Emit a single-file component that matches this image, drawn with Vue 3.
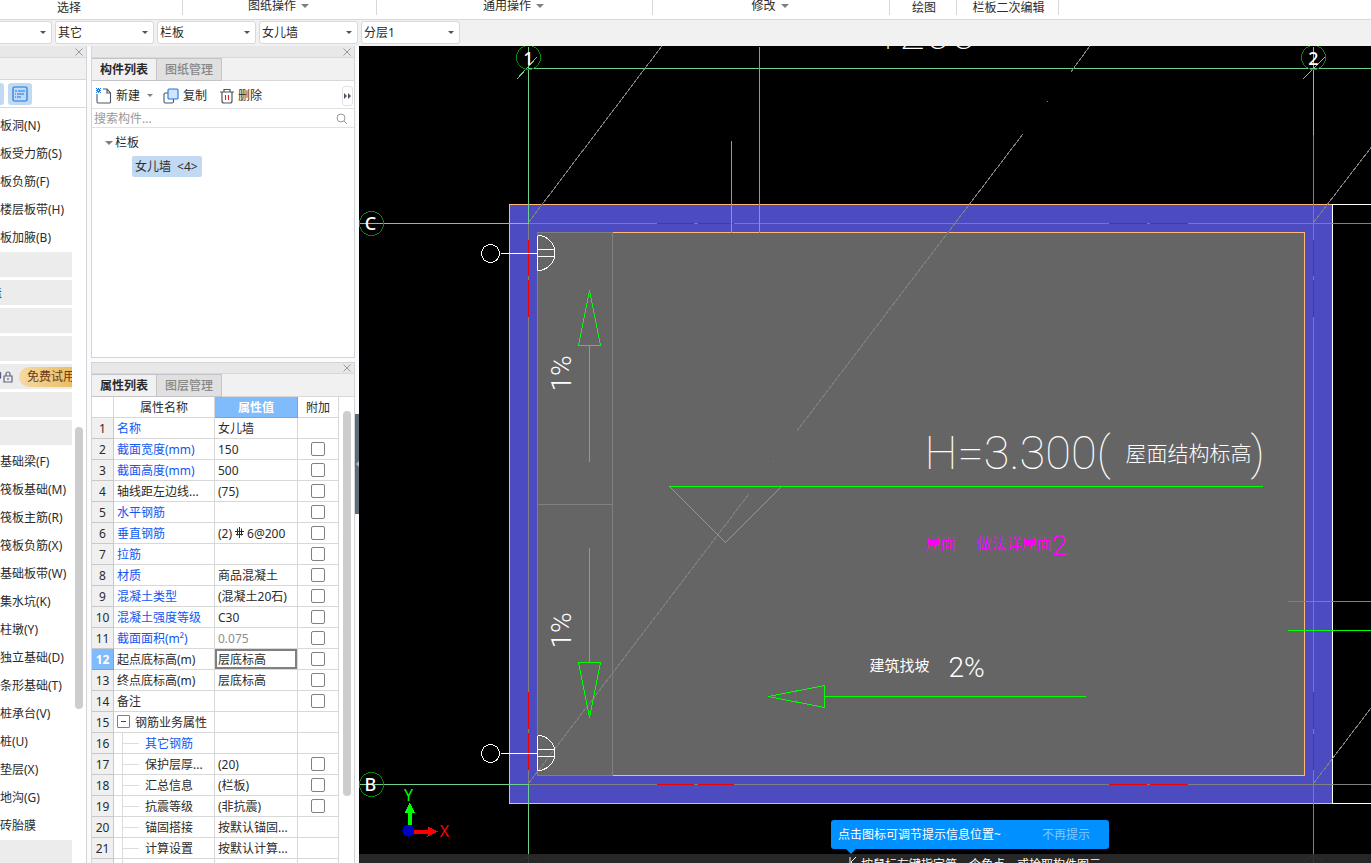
<template>
  <div class="app">
    <nav class="ribbon">
      <div
        v-for="group in ribbon"
        :key="group.label"
        class="ribbon-group"
        :class="[group.size, { dropdown: group.menu }]"
      >
        <button v-if="group.menu" type="button" class="ribbon-menu">
          {{ group.label }}<i class="caret"></i>
        </button>
        <span v-else>{{ group.label }}</span>
      </div>
    </nav>

    <div class="context-bar">
      <label v-for="(item, i) in selects" :key="i" class="combo" :class="{ first: i === 0 }">
        <select :aria-label="item.name">
          <option>{{ item.value }}</option>
        </select>
        <i class="combo-caret"></i>
      </label>
    </div>

    <main class="workspace">
      <aside class="nav-dock">
        <div class="dock-title">
          <button type="button" class="close" aria-label="关闭">
            <svg width="8" height="8" viewBox="0 0 8 8"><path d="M0.5 0.5l7 7M7.5 0.5l-7 7" /></svg>
          </button>
        </div>
        <div class="dock-strip"></div>
        <div class="view-row">
          <button type="button" class="view-btn cut" aria-label="图标视图"></button>
          <button type="button" class="view-btn" aria-label="列表视图">
            <svg width="16" height="16" viewBox="0 0 16 16">
              <rect x="1" y="1" width="14" height="14" rx="1.5" fill="none" stroke="#1677ef" stroke-width="1.2" />
              <path d="M3 5h2M6 5h7M3 8h1M5 8h7M3 11h1M5 11h4" stroke="#1677ef" stroke-width="1.2" />
            </svg>
          </button>
        </div>
        <div class="nav-body">
          <ul class="nav-list">
            <li v-for="(item, i) in navItems" :key="i" :class="{ bar: item.bar }">
              <span v-if="item.tail" class="tail">{{ item.tail }}</span>
              <template v-if="item.locked">
                <svg class="lock" width="10" height="12" viewBox="0 0 10 12">
                  <path d="M1 5h8v6H1zM3 5V3a2 2 0 0 1 4 0v2M5 7v2" fill="none" stroke="#5c6878" stroke-width="1.2" />
                </svg>
                <button type="button" class="trial">免费试用</button>
              </template>
              <a v-if="item.text" href="#">{{ item.text }}</a>
            </li>
          </ul>
          <div class="nav-scroll"><div class="nav-thumb"></div></div>
        </div>
      </aside>

      <div class="panels">
        <section class="panel">
          <div class="dock-title">
            <button type="button" class="close" aria-label="关闭">
              <svg width="8" height="8" viewBox="0 0 8 8"><path d="M0.5 0.5l7 7M7.5 0.5l-7 7" /></svg>
            </button>
          </div>
          <div class="tabs">
            <button type="button" class="tab active">构件列表</button>
            <button type="button" class="tab">图纸管理</button>
          </div>
          <div class="toolbar">
            <button type="button" class="tool new">
              <svg width="16" height="16" viewBox="0 0 16 16">
                <path d="M1 6v7.500a1.500 1.500 0 0 0 1.500 1.500h11a1 1 0 0 0 1-1V5L11 1H7M11 1v4h3.500" fill="none" stroke="#4c5563" stroke-width="1.100" />
                <path d="M0 0h1v1h1V0h1v1h1V0h1v1H4v1h1v1H4v1h1v1H4V4H3v1H2V4H1v1H0V4h1V3H0V2h1V1H0zM2 2v1h1V2z" fill="#1677ef" />
              </svg>
              新建<i class="caret"></i>
            </button>
            <button type="button" class="tool copy">
              <svg width="16" height="16" viewBox="0 0 16 16">
                <path d="M5 5H2.500A1.500 1.500 0 0 0 1 6.500V13.500A1.500 1.500 0 0 0 2.500 15H9a1.500 1.500 0 0 0 1.500-1.500V11" fill="none" stroke="#4c5563" stroke-width="1.100" />
                <rect x="5" y="1" width="10" height="10" rx="1" fill="#d3e5fb" stroke="#1677ef" stroke-width="1.100" />
              </svg>
              复制
            </button>
            <button type="button" class="tool">
              <svg width="14" height="16" viewBox="0 0 14 16">
                <path d="M0 4h14M4 4V1.500h6V4M2 4v9a2 2 0 0 0 2 2h6a2 2 0 0 0 2-2V4" fill="none" stroke="#4c5563" stroke-width="1.200" />
                <path d="M5.500 7v5M8.500 7v5" stroke="#e02020" stroke-width="1.100" />
              </svg>
              删除
            </button>
            <button type="button" class="more" aria-label="更多">
              <svg width="8" height="6" viewBox="0 0 8 6"><path d="M0 0l3 3-3 3zM4 0l3 3-3 3z" fill="#4c5563" /></svg>
            </button>
          </div>
          <div class="search">
            <input type="text" placeholder="搜索构件..." aria-label="搜索构件" />
            <svg width="11" height="11" viewBox="0 0 11 11">
              <circle cx="5" cy="5" r="4" fill="none" stroke="#999" />
              <path d="M8 8l3 3" stroke="#999" />
            </svg>
          </div>
          <div class="tree">
            <div class="tree-root"><i class="caret"></i>栏板</div>
            <button type="button" class="tree-leaf"><span>女儿墙</span><span>&lt;4&gt;</span></button>
          </div>
        </section>

        <section class="panel props">
          <div class="dock-title">
            <button type="button" class="close" aria-label="关闭">
              <svg width="8" height="8" viewBox="0 0 8 8"><path d="M0.5 0.5l7 7M7.5 0.5l-7 7" /></svg>
            </button>
          </div>
          <div class="tabs">
            <button type="button" class="tab active">属性列表</button>
            <button type="button" class="tab">图层管理</button>
          </div>
          <div class="props-body">
            <table>
              <colgroup>
                <col class="c-num" />
                <col class="c-name" />
                <col class="c-value" />
                <col class="c-extra" />
              </colgroup>
              <thead>
                <tr>
                  <th></th>
                  <th>属性名称</th>
                  <th class="picked">属性值</th>
                  <th>附加</th>
                </tr>
              </thead>
              <tbody>
                <tr v-for="(row, i) in rows" :key="i" :class="{ current: i === 11 }">
                  <td class="num">{{ i + 1 }}</td>
                  <td class="name" :class="{ blue: row.blue, child: row.child, parent: row.parent }">
                    <div v-if="row.parent" class="parent-label">
                      <button type="button" class="fold" aria-label="折叠"></button>{{ row.name }}
                    </div>
                    <template v-else>{{ row.name }}</template>
                  </td>
                  <td class="value" :class="{ muted: row.muted }">
                    <template v-if="row.rebar">
                      (2)<svg class="rebar" width="9" height="11" viewBox="0 0 9 11">
                        <path d="M4.500 0v11M0 4.500h9M1 7.500h7M2.500 1.500v7M6.500 1.500v7" />
                      </svg>6@200
                    </template>
                    <template v-else>{{ row.value }}</template>
                  </td>
                  <td class="extra">
                    <input v-if="row.check" type="checkbox" :aria-label="row.name + ' 附加'" />
                  </td>
                </tr>
              </tbody>
            </table>
            <div class="props-scroll"><div class="props-thumb"></div></div>
          </div>
        </section>
      </div>

      <div class="splitter">
        <button type="button" aria-label="收起面板"><i></i></button>
      </div>

      <section class="canvas">
        <svg class="drawing" width="100%" height="100%">
          <g transform="translate(-358.500 -45.500)">
            <!-- parapet wall and slab -->
            <rect x="509" y="204" width="823" height="599" fill="#4c4cc0" stroke="#ffb878" />
            <rect x="537" y="232" width="767" height="543" fill="#656565" stroke="#808080" />
            <path class="orange" d="M612 232H1304V775H612" />
            <path class="white" d="M1371 204H1332V803H1371M1332 204H2400M1332 803H2400" />
            <path class="grey" d="M612 232V775M537 504H612" />

            <!-- axis grid -->
            <path class="grey" d="M528 223H2400M528 784H2400M528 223V784M1313 134V863M1287 601H2400" />
            <path class="axis" d="M359 223H528V46M359 784H528V863M528 68H2400M1313 46V134M516 79L536 57M1302 79L1324 57" />
            <path class="red" d="M656 223H693M697 223H733M1108 223H1146M1149 223H1187M656 784H693M697 784H733M1108 784H1146M1149 784H1187" />
            <path class="red" d="M528 239V275M528 279V316M528 691V728M528 732V769M1313 239V275M1313 279V316M1313 691V728M1313 733V769" />
            <path class="grey" d="M528 222L661 46M528 783L748 494M772 462L773 461M796 431L1022 134M1046 102L1047 101M1070 72L1089 46M1313 222L1448 46M1313 783L1450 603" />
            <g class="bubble">
              <circle cx="528" cy="57" r="12" />
              <circle cx="1313" cy="57" r="12" />
              <circle cx="371" cy="223" r="12" />
              <circle cx="371" cy="784" r="12" />
              <circle cx="528" cy="869" r="12" />
              <circle cx="1313" cy="869" r="12" />
            </g>
            <g class="bubble-text">
              <text x="528" y="64">1</text>
              <text x="1313" y="64">2</text>
              <text x="370" y="229">C</text>
              <text x="370" y="790">B</text>
            </g>

            <!-- slope marks and notes -->
            <path class="green" d="M731 140V232M759 46V232M1287 630H2400" />
            <path class="green" d="M589 290L578 345H600ZM589 345V461M589 547V662M578 662H600L589 717Z" />
            <path class="green" d="M1262 486H669L725 542L781 486M1085 696H824M824 685V707L768 696Z" />
            <g v-for="y in [253, 753]" :key="y" class="white">
              <circle cx="490" :cy="y" r="9" />
              <path :d="`M500 ${y}H537M537 ${y - 18}V${y + 17}A17 17 0 0 0 537 ${y - 18}M537 ${y - 4}H554M537 ${y + 3}H554`" />
            </g>
            <g class="cad">
              <text x="873" y="48" class="big">1200</text>
              <text x="924" y="468" class="big">H=3.300(</text>
              <text x="1125" y="460" class="mid">屋面结构标高</text>
              <text x="1250" y="468" class="big">)</text>
              <text x="869" y="670" class="small">建筑找坡</text>
              <text x="948" y="676" class="slope">2%</text>
              <text transform="translate(570 391) rotate(-90)" class="slope">1%</text>
              <text transform="translate(570 648) rotate(-90)" class="slope">1%</text>
              <g class="magenta">
                <text x="925" y="548" class="small">屋面</text>
                <text x="976" y="548" class="small">做法详屋面</text>
                <text x="1051" y="554" class="slope">2</text>
              </g>
            </g>

            <!-- coordinate triad -->
            <path d="M407 826V812H404L409 802L414 812H411V826Z" fill="#0f0" />
            <path d="M413 829H427V826L438 831L427 836V833H413Z" fill="#f00" />
            <circle cx="408" cy="830" r="6" fill="#0000c0" />
            <text x="408" y="800" class="triad" fill="#0f0">Y</text>
            <text x="444" y="836" class="triad" fill="#f00">X</text>
          </g>
        </svg>
        <div class="status">
          <svg width="8" height="10" viewBox="0 0 8 10"><path d="M1 0v10M7 0L2 5l5 5" fill="none" stroke="#fff" /></svg>
          <span>按鼠标左键指定第一个角点，或拾取构件图元</span>
        </div>
        <div class="tip">
          <span>点击图标可调节提示信息位置~</span>
          <button type="button">不再提示</button>
        </div>
      </section>
    </main>
  </div>
</template>

<script setup>
const ribbon = [
  { label: '选择', size: 'g-select' },
  { label: '图纸操作', size: 'g-sheet', menu: true },
  { label: '通用操作', size: 'g-common', menu: true },
  { label: '修改', size: 'g-modify', menu: true },
  { label: '绘图', size: 'g-draw' },
  { label: '栏板二次编辑', size: 'g-edit' }
]

const selects = [
  { name: '楼层', value: '' },
  { name: '构件分类', value: '其它' },
  { name: '构件类型', value: '栏板' },
  { name: '构件', value: '女儿墙' },
  { name: '分层', value: '分层1' }
]

const navItems = [
  { text: '板洞(N)' },
  { text: '板受力筋(S)' },
  { text: '板负筋(F)' },
  { text: '楼层板带(H)' },
  { text: '板加腋(B)' },
  { bar: true },
  { bar: true, tail: '盖' },
  { bar: true },
  { bar: true },
  { bar: true, tail: '中', locked: true },
  { bar: true },
  { bar: true },
  { text: '基础梁(F)' },
  { text: '筏板基础(M)' },
  { text: '筏板主筋(R)' },
  { text: '筏板负筋(X)' },
  { text: '基础板带(W)' },
  { text: '集水坑(K)' },
  { text: '柱墩(Y)' },
  { text: '独立基础(D)' },
  { text: '条形基础(T)' },
  { text: '桩承台(V)' },
  { text: '桩(U)' },
  { text: '垫层(X)' },
  { text: '地沟(G)' },
  { text: '砖胎膜' },
  { bar: true }
]

const rows = [
  { name: '名称', value: '女儿墙', blue: true },
  { name: '截面宽度(mm)', value: '150', blue: true, check: true },
  { name: '截面高度(mm)', value: '500', blue: true, check: true },
  { name: '轴线距左边线...', value: '(75)', check: true },
  { name: '水平钢筋', value: '', blue: true, check: true },
  { name: '垂直钢筋', rebar: true, blue: true, check: true },
  { name: '拉筋', value: '', blue: true, check: true },
  { name: '材质', value: '商品混凝土', blue: true, check: true },
  { name: '混凝土类型', value: '(混凝土20石)', blue: true, check: true },
  { name: '混凝土强度等级', value: 'C30', blue: true, check: true },
  { name: '截面面积(m²)', value: '0.075', blue: true, muted: true, check: true },
  { name: '起点底标高(m)', value: '层底标高', check: true },
  { name: '终点底标高(m)', value: '层底标高', check: true },
  { name: '备注', value: '', check: true },
  { name: '钢筋业务属性', value: '', parent: true },
  { name: '其它钢筋', value: '', blue: true, child: true },
  { name: '保护层厚...', value: '(20)', child: true, check: true },
  { name: '汇总信息', value: '(栏板)', child: true, check: true },
  { name: '抗震等级', value: '(非抗震)', child: true, check: true },
  { name: '锚固搭接', value: '按默认锚固...', child: true },
  { name: '计算设置', value: '按默认计算...', child: true },
  { name: '节点设置', value: '按默认节点...', child: true }
]
</script>

<style>
body {
  overflow: hidden;
}
</style>

<style scoped>
.app {
  display: flex;
  flex-direction: column;
  height: 100vh;
  background: #fafbfe;
  color: #2b2b2b;
  font: 12px/20px "Noto Sans", "Noto Sans CJK SC", sans-serif;
}

.app *,
.app *::before,
.app *::after {
  box-sizing: border-box;
}

button,
select,
input {
  margin: 0;
  padding: 0;
  border: 0;
  background: none;
  color: inherit;
  font: inherit;
}

svg {
  display: block;
  flex: none;
}

.caret {
  border: 4px solid transparent;
  border-top-color: #808080;
  border-bottom: 0;
}

/* ribbon */
.ribbon {
  display: flex;
  flex: none;
  height: 20px;
  background: #fff;
  border-bottom: 1px solid #d8d8d8;
}

.ribbon-group {
  display: flex;
  flex: none;
  justify-content: center;
  height: 15px;
  border-right: 1px solid #d8d8d8;
  line-height: 15px;
}

.ribbon-menu {
  display: flex;
  align-items: center;
  gap: 5px;
  height: 11px;
  line-height: 11px;
}

.g-select {
  width: 183px;
  padding-right: 44px;
}

.g-sheet {
  width: 194px;
  padding-right: 2px;
}

.g-common {
  width: 276px;
  padding-right: 2px;
}

.g-modify {
  width: 237px;
  padding-right: 2px;
}

.g-draw {
  width: 67px;
  padding-left: 2px;
}

.g-edit {
  width: 102px;
  padding-left: 2px;
}

/* context bar */
.context-bar {
  display: flex;
  flex: none;
  gap: 3px;
  height: 26px;
  padding-top: 1px;
  background: #f1f1f1;
}

.combo {
  position: relative;
  width: 99px;
  height: 23px;
}

.combo.first {
  width: 52px;
}

.combo select {
  appearance: none;
  display: block;
  width: 100%;
  height: 100%;
  padding: 0 2px;
  border: 1px solid #d8d8d8;
  border-radius: 3px;
  background: #fff;
}

.combo.first select {
  border-left: 0;
  border-radius: 0 3px 3px 0;
}

.combo-caret {
  position: absolute;
  top: 10px;
  right: 6px;
  border: 3px solid transparent;
  border-top-color: #4c5563;
  border-bottom: 0;
}

/* docks */
.workspace {
  display: flex;
  flex: 1;
  min-height: 0;
}

.dock-title {
  display: flex;
  flex: none;
  align-items: center;
  justify-content: flex-end;
  height: 12px;
  padding-right: 3px;
  background: #e8e8e8;
  border-bottom: 1px solid #d8d8d8;
}

.close path {
  stroke: #999;
}

.nav-dock {
  display: flex;
  flex: none;
  flex-direction: column;
  width: 87px;
  background: #fff;
  border-right: 1px solid #d4d4d4;
}

.dock-strip {
  flex: none;
  height: 22px;
  background: #f1f1f1;
  border-bottom: 1px solid #d8d8d8;
}

.view-row {
  display: flex;
  flex: none;
  align-items: center;
  gap: 4px;
  height: 28px;
  border-bottom: 1px solid #d8d8d8;
}

.view-btn {
  display: grid;
  place-items: center;
  width: 24px;
  height: 22px;
  border-radius: 3px;
  background: #c2d9f2;
}

.view-btn.cut {
  width: 4px;
  border-radius: 0 3px 3px 0;
}

.nav-body {
  display: flex;
  flex: 1;
  justify-content: space-between;
  min-height: 0;
  padding-top: 3px;
}

.nav-list {
  display: flex;
  flex-direction: column;
  width: 72px;
  margin: 0;
  padding: 0;
  overflow: hidden;
  list-style: none;
}

.nav-list li {
  display: flex;
  flex: none;
  align-items: center;
  height: 28px;
  padding-top: 1px;
  white-space: nowrap;
}

.nav-list li.bar {
  height: 25px;
  margin: 1px 0 2px;
  background: #ececec;
}

.nav-list a {
  color: inherit;
  text-decoration: none;
}

.tail {
  display: flex;
  flex: none;
  justify-content: flex-end;
  width: 2px;
  overflow: hidden;
}

.lock {
  margin: 0 6px 0 1px;
}

.trial {
  flex: none;
  height: 20px;
  padding: 0 0 0 8px;
  border-radius: 10px 0 0 10px;
  background: linear-gradient(90deg, #f6d9a5, #e8bc62);
  color: #6b3a10;
}

.nav-scroll {
  width: 11px;
  padding-top: 316px;
}

.nav-thumb {
  width: 8px;
  height: 282px;
  border-radius: 4px;
  background: #cdcdcd;
}

.panels {
  display: flex;
  flex: none;
  flex-direction: column;
  gap: 4px;
  width: 264px;
  margin-left: 4px;
}

.panel {
  display: flex;
  flex: none;
  flex-direction: column;
  height: 312px;
  background: #fff;
  border: 1px solid #d4d4d4;
  border-top: 0;
}

.panel.props {
  flex: 1;
  min-height: 0;
  border-top: 1px solid #d4d4d4;
  border-bottom: 0;
}

.props .dock-title {
  height: 11px;
}

.tabs {
  display: flex;
  flex: none;
  height: 23px;
  background: #f1f1f1;
  border-bottom: 1px solid #d8d8d8;
}

.tab {
  width: 65px;
  height: 23px;
  border: 1px solid #c4c4c8;
  border-left: 0;
  background: #e0e0e0;
  color: #888;
  font-weight: 500;
}

.tab.active {
  background: #f1f1f1;
  color: #2b2b2b;
  font-weight: 700;
}

.toolbar {
  display: flex;
  flex: none;
  align-items: center;
  height: 28px;
  padding: 2px 1px 0 4px;
  border-bottom: 1px solid #e2e2e2;
}

.tool {
  display: flex;
  align-items: center;
  gap: 4px;
  margin-right: 13px;
}

.tool.new {
  margin-right: 10px;
}

.tool .caret {
  margin-left: 3px;
  border-width: 3px;
  border-bottom: 0;
}

.more {
  display: grid;
  place-items: center;
  width: 11px;
  height: 20px;
  margin-left: auto;
  border: 1px solid #e2e2e2;
  border-radius: 3px;
}

.search {
  display: flex;
  flex: none;
  align-items: center;
  height: 19px;
  padding: 0 7px 0 2px;
  border-bottom: 1px solid #e2e2e2;
}

.search input {
  flex: 1;
  min-width: 0;
  height: 18px;
  padding-top: 1px;
  outline: 0;
}

.search input::placeholder {
  color: #999;
}

.tree {
  padding: 3px 0 0 13px;
}

.tree-root {
  display: flex;
  align-items: center;
  gap: 2px;
  height: 24px;
}

.tree-leaf {
  display: flex;
  align-items: center;
  gap: 6px;
  height: 21px;
  margin: 1px 0 0 27px;
  padding: 0 4px 0 3px;
  border-radius: 2px;
  background: #c2d9f2;
}

/* property table */
.props-body {
  display: flex;
  flex: 1;
  justify-content: space-between;
  min-height: 0;
  overflow: hidden;
}

table {
  align-self: flex-start;
  width: 247px;
  table-layout: fixed;
  border-collapse: separate;
  border-spacing: 0;
}

.c-num {
  width: 22px;
}

.c-name {
  width: 101px;
}

.c-value {
  width: 83px;
}

.c-extra {
  width: 41px;
}

th,
td {
  height: 21px;
  padding: 2px 0 0;
  border-right: 1px solid #d8d8d8;
  border-bottom: 1px solid #d8d8d8;
  line-height: 18px;
  white-space: nowrap;
  overflow: hidden;
}

th {
  font-weight: 400;
}

th.picked {
  background: #80bbfb;
  border-color: #62a8f4;
  color: #fff;
  font-weight: 700;
}

.num {
  background: #f0f0f0;
  border-color: #c8c8c8;
  text-align: center;
}

.current .num {
  background: #80bbfb;
  border-color: #62a8f4;
  color: #fff;
  font-weight: 700;
}

.name {
  padding-left: 3px;
}

.blue {
  color: #1257f0;
}

.name.child {
  position: relative;
  padding-left: 31px;
}

.name.child::before {
  content: "";
  position: absolute;
  top: 0;
  left: 8px;
  height: 21px;
  border-left: 1px solid #dcdcdc;
}

.name.child::after {
  content: "";
  position: absolute;
  top: 10px;
  left: 8px;
  width: 17px;
  border-top: 1px solid #dcdcdc;
}

.parent-label {
  display: flex;
  gap: 5px;
  height: 18px;
}

.fold {
  display: grid;
  flex: none;
  place-items: center;
  width: 13px;
  height: 13px;
  margin-top: 1px;
  border: 1px solid #808080;
  border-radius: 1px;
}

.fold::before {
  content: "";
  width: 5px;
  height: 1px;
  background: #444;
}

.value {
  padding-left: 3px;
}

.current .value {
  box-shadow: inset 0 0 0 2px #808080;
}

.muted {
  color: #8c8c8c;
}

.rebar {
  display: inline-block;
  margin: 0 3px;
  vertical-align: 0;
  fill: none;
  stroke: #2b2b2b;
}

.extra {
  padding: 0;
}

.extra input {
  appearance: none;
  display: block;
  width: 14px;
  height: 14px;
  margin: 0 auto;
  border: 1px solid #808080;
  border-radius: 2px;
  background: #fff;
}

.props-scroll {
  width: 11px;
  padding-top: 14px;
}

.props-thumb {
  width: 8px;
  height: 385px;
  border-radius: 4px;
  background: #cdcdcd;
}

.splitter {
  flex: none;
  width: 4px;
  padding-top: 368px;
}

.splitter button {
  display: grid;
  place-items: center;
  width: 4px;
  height: 100px;
  background: #5f6b79;
}

.splitter i {
  border: 3px solid transparent;
  border-right-color: #b4bac2;
  border-left: 0;
}

/* model view */
.canvas {
  position: relative;
  flex: 1;
  min-width: 0;
  overflow: hidden;
  background: #000;
}

.drawing {
  shape-rendering: crispEdges;
}

.drawing path:not([fill]),
.white circle,
.bubble circle {
  fill: none;
}

.orange {
  stroke: #ffb878;
}

.white {
  stroke: #fff;
}

.grey {
  stroke: #808080;
}

.axis {
  stroke: #6fd08c;
}

.red {
  stroke: #f00000;
}

.green {
  stroke: #0f0;
}

.bubble circle {
  stroke: #0a860a;
}

.bubble-text {
  fill: #fff;
  font-size: 18px;
  font-weight: 500;
  text-anchor: middle;
}

.cad {
  fill: #fff;
  font-family: Roboto, "Noto Sans CJK SC", sans-serif;
  font-weight: 100;
}

.cad .magenta {
  fill: #f0f;
  font-weight: 400;
}

.big {
  font-size: 47px;
}

.mid {
  font-size: 21px;
  font-weight: 300;
}

.small {
  font-size: 15px;
  font-weight: 400;
}

.slope {
  font-size: 28px;
  font-weight: 300;
}

.triad {
  font-size: 16px;
  text-anchor: middle;
}

.status {
  position: absolute;
  right: 0;
  bottom: 0;
  left: 0;
  display: flex;
  gap: 4px;
  height: 9px;
  padding: 3px 0 0 490px;
  background: rgba(43, 43, 43, 0.9);
  color: #fff;
  line-height: 16px;
  white-space: nowrap;
  overflow: hidden;
}

.tip {
  position: absolute;
  bottom: 14px;
  left: 472px;
  display: flex;
  align-items: center;
  justify-content: space-between;
  width: 278px;
  height: 29px;
  padding: 0 19px 0 7px;
  border-radius: 3px;
  background: #0090ff;
  color: #fff;
}

.tip::after {
  content: "";
  position: absolute;
  top: 29px;
  left: 15px;
  border: 5px solid transparent;
  border-top-color: #0090ff;
  border-bottom: 0;
}

.tip button {
  color: #80c8ff;
}
</style>
